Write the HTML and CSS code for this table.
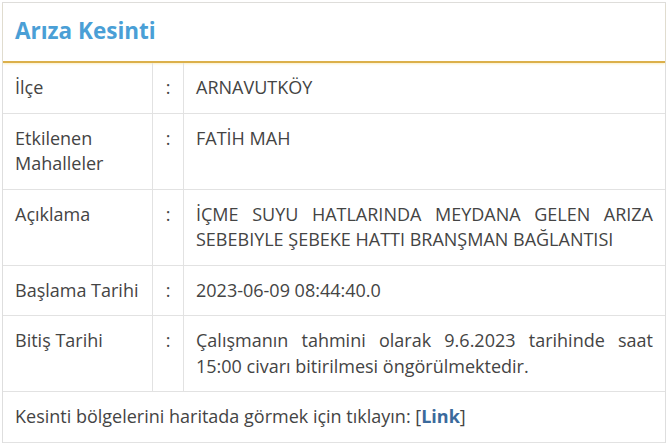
FILE: index.html
```html
<!DOCTYPE html>
<html lang="tr">
<head>
    <meta charset="UTF-8">
    <meta name="viewport" content="width=device-width, initial-scale=1.0">
    <title>Arıza Kesinti</title>
    <link rel="stylesheet" href="styles.css">
</head>
<body>

    <div class="panel">
        <h2 class="panel-title">Arıza Kesinti</h2>

        <table class="info-table">
            <tr>
                <td class="label">İlçe</td>
                <td class="sep">:</td>
                <td class="value">ARNAVUTKÖY</td>
            </tr>
            <tr>
                <td class="label">Etkilenen Mahalleler</td>
                <td class="sep">:</td>
                <td class="value">FATİH MAH</td>
            </tr>
            <tr>
                <td class="label">Açıklama</td>
                <td class="sep">:</td>
                <td class="value">İÇME SUYU HATLARINDA MEYDANA GELEN ARIZA SEBEBIYLE ŞEBEKE HATTI BRANŞMAN BAĞLANTISI</td>
            </tr>
            <tr>
                <td class="label">Başlama Tarihi</td>
                <td class="sep">:</td>
                <td class="value">2023-06-09 08:44:40.0</td>
            </tr>
            <tr>
                <td class="label">Bitiş Tarihi</td>
                <td class="sep">:</td>
                <td class="value">Çalışmanın tahmini olarak 9.6.2023 tarihinde saat 15:00 civarı bitirilmesi öngörülmektedir.</td>
            </tr>
            <tr>
                <td class="footer" colspan="3">Kesinti bölgelerini haritada görmek için tıklayın: [<a href="#">Link</a>]</td>
            </tr>
        </table>
    </div>

</body>
</html>
```

FILE: styles.css
```css
body {
    margin: 2px;
    font-family: 'Open Sans', sans-serif;
    color: #444;
    background: #fff;
}
.panel {
    border: 1px solid #dedede;
    border-bottom: none;
}
.panel-title {
    margin: 0;
    padding: 13px 12px 15px;
    font-size: 22.5px;
    line-height: 30px;
    font-weight: bold;
    color: #4a9fd6;
    border-bottom: 2px solid #dcb04a;
    box-shadow: 0 1px 2px rgba(245, 210, 90, 0.35);
}
.info-table {
    width: 100%;
    border-collapse: collapse;
    font-size: 18px;
    line-height: 25.5px;
}
.info-table td {
    border-bottom: 1px solid #e2e2e2;
    padding: 12px 12px 12px;
    vertical-align: top;
}
.label {
    width: 125px;
    border-right: 1px solid #e2e2e2;
}
.sep {
    width: 6px;
    text-align: center;
    border-right: 1px solid #e2e2e2;
}
.value {
    padding-left: 12px !important;
    text-align: justify;
}
.footer a {
    color: #3b6a9c;
    font-weight: bold;
    text-decoration: none;
}
```
